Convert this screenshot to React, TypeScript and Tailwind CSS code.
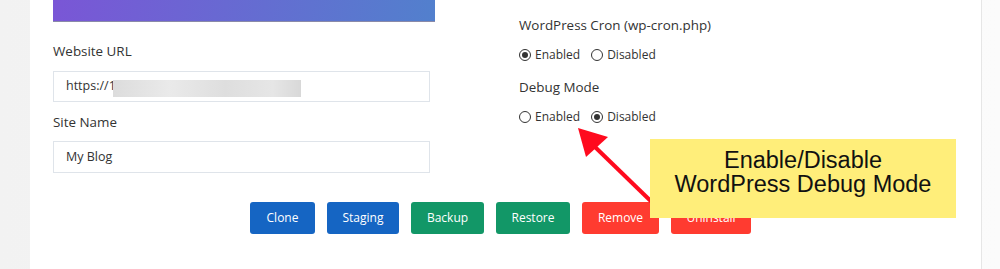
import React from "react";

function Radio({ checked, label }: { checked: boolean; label: string }) {
  return (
    <span className="flex items-center gap-[4px]">
      <span className="w-[12px] h-[12px] rounded-full border border-[#333] flex items-center justify-center bg-white">
        {checked && <span className="w-[6px] h-[6px] rounded-full bg-[#333]" />}
      </span>
      <span className="text-[12px] text-[#333]">{label}</span>
    </span>
  );
}

function Btn({ label, color, w }: { label: string; color: string; w: string }) {
  return (
    <div
      className={`${color} ${w} h-[32px] rounded-[3px] text-white text-[12px] flex items-center justify-center`}
    >
      {label}
    </div>
  );
}

export default function App() {
  return (
    <div className="relative w-[1000px] h-[269px] overflow-hidden flex bg-[linear-gradient(90deg,#f2f2f2,#fbfbfb)] font-['Open_Sans',sans-serif]">
      <div className="ml-[30px] w-[952px] h-full bg-white border-r border-[#e6e6e6] pl-[23px] pr-[33px]">
        <div className="flex">
          <div className="w-[382px]">
            <div className="h-[22px] bg-[linear-gradient(100deg,#7a56d6,#5280cd)] border-b border-[#8a8aa8]" />
            <div className="mt-[19px] leading-[20px] text-[13.4px] text-[#333]">Website URL</div>
            <div className="mt-[10px] h-[31px] w-[377px] border border-[#dfe4ea] flex items-center pl-[12px] text-[12.5px] text-[#333]">
              <span>https://1</span>
              <span className="ml-[-3px] mt-[3px] w-[188px] h-[17px] bg-[linear-gradient(90deg,#dcdcdc,#eaeaea_30%,#dedede_60%,#e6e6e6_85%,#d8d8d8)]" />
            </div>
            <div className="mt-[10px] leading-[20px] text-[13.4px] text-[#333]">Site Name</div>
            <div className="mt-[9px] h-[32px] w-[377px] border border-[#dfe4ea] flex items-center pl-[12px] text-[12.5px] text-[#333]">
              My Blog
            </div>
          </div>
          <div className="ml-[84px] pt-[15px]">
            <div className="leading-[20px] text-[13.4px] text-[#333]">WordPress Cron (wp-cron.php)</div>
            <div className="mt-[10px] h-[20px] flex items-center gap-[11px]">
              <Radio checked label="Enabled" />
              <Radio checked={false} label="Disabled" />
            </div>
            <div className="mt-[12px] leading-[20px] text-[13.4px] text-[#333]">Debug Mode</div>
            <div className="mt-[10px] h-[20px] flex items-center gap-[11px]">
              <Radio checked={false} label="Enabled" />
              <Radio checked label="Disabled" />
            </div>
          </div>
        </div>
        <div className="mt-[29px] flex justify-center gap-[12px]">
          <Btn label="Clone" color="bg-[#1565c3]" w="w-[65px]" />
          <Btn label="Staging" color="bg-[#1565c3]" w="w-[72px]" />
          <Btn label="Backup" color="bg-[#129767]" w="w-[73px]" />
          <Btn label="Restore" color="bg-[#129767]" w="w-[74px]" />
          <Btn label="Remove" color="bg-[#ff3b30]" w="w-[77px]" />
          <Btn label="Uninstall" color="bg-[#ff3b30]" w="w-[80px]" />
        </div>
      </div>

      <svg className="absolute left-0 top-0" width="1000" height="269" viewBox="0 0 1000 269">
        <line x1="594" y1="146" x2="660" y2="210" stroke="#ff0a1e" strokeWidth="4" />
        <polygon points="578,128 586,157 608,137" fill="#ff0a1e" />
      </svg>

      <div className="absolute left-[650px] top-[139px] w-[306px] h-[79px] bg-[#ffee7a] pt-[9px] text-center font-['Liberation_Sans',Arial,sans-serif] text-[23.5px] leading-[24px] text-[#111]">
        <div>Enable/Disable</div>
        <div>WordPress Debug Mode</div>
      </div>
    </div>
  );
}
